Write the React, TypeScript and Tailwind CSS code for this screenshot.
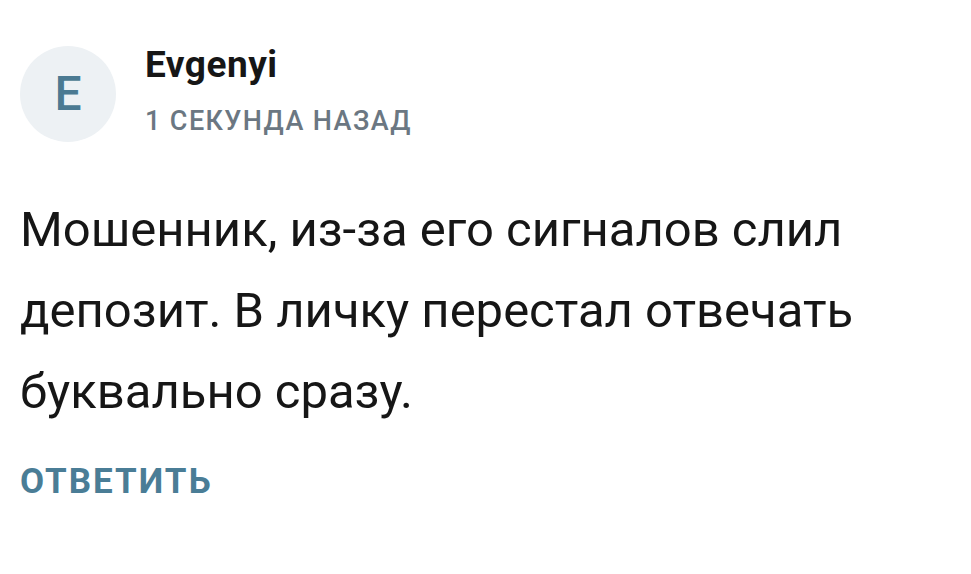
const App = () => {
  return (
    <div className="min-h-screen w-full bg-white font-['Roboto',sans-serif] text-[#161616]">
      <div className="pl-[20px] pr-[20px] pt-[46px]">
        {/* header */}
        <div className="flex items-start gap-[29px]">
          <div className="w-[96px] h-[96px] rounded-full bg-[#edf1f4] flex items-center justify-center shrink-0">
            <span className="text-[48px] font-medium leading-none text-[#4b7a92]">E</span>
          </div>
          <div className="flex flex-col mt-[1px]">
            <span className="text-[37px] font-bold leading-[36px] tracking-[0.5px] text-[#161616]">Evgenyi</span>
            <span className="mt-[23px] text-[27px] font-medium leading-[30px] tracking-[1.4px] text-[#6b7782]">1 СЕКУНДА НАЗАД</span>
          </div>
        </div>

        {/* body */}
        <p className="mt-[47px] text-[49px] leading-[81px]">
          Мошенник, из-за его сигналов слил депозит. В личку перестал отвечать буквально сразу.
        </p>

        <button className="mt-[31px] block text-[35px] font-bold leading-[38px] tracking-[2px] text-[#4a7d96]">ОТВЕТИТЬ</button>
      </div>
    </div>
  );
};

export default App;
